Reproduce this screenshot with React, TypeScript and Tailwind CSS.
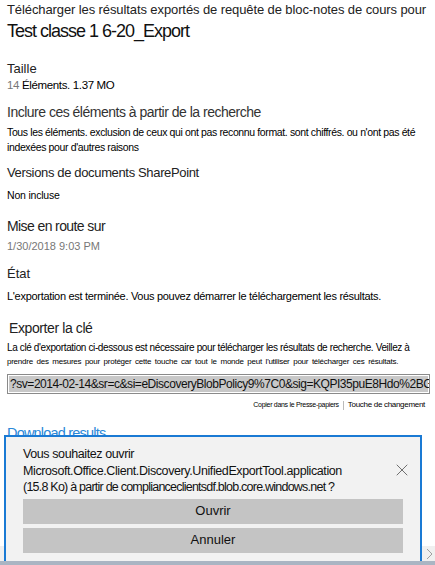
import { X } from "lucide-react";

const font = { fontFamily: '"Liberation Sans", Arial, sans-serif' };

function Label({ children, className = "" }: { children: React.ReactNode; className?: string }) {
  return <div className={`whitespace-nowrap text-[#222] ${className}`}>{children}</div>;
}

export default function App() {
  return (
    <div
      className="relative h-[565px] w-[435px] overflow-hidden bg-white text-black"
      style={font}
    >
      <div className="pl-[7px] pr-[5px]">
        <div className="whitespace-nowrap text-[13px] leading-[19px] tracking-[-0.1px] text-[#222]">
          Télécharger les résultats exportés de requête de bloc-notes de cours pour
        </div>
        <h1 className="whitespace-nowrap text-[18px] leading-[24px] tracking-[-1px] text-[#111]">
          Test classe 1 6-20_Export
        </h1>

        <Label className="mt-[17px] text-[13px] leading-[17px]">Taille</Label>
        <div className="whitespace-nowrap text-[11.5px] leading-[16px] tracking-[-0.35px]">
          <span className="text-[#777]">14</span> Éléments. 1.37 MO
        </div>

        <Label className="mt-[9px] text-[14px] leading-[20px] tracking-[-0.5px] text-[#333]">
          Inclure ces éléments à partir de la recherche
        </Label>
        <div className="mt-[3px] whitespace-nowrap text-[10.5px] leading-[15px] tracking-[-0.37px]">
          <div>Tous les éléments. exclusion de ceux qui ont pas reconnu format. sont chiffrés. ou n'ont pas été</div>
          <div>indexées pour d'autres raisons</div>
        </div>

        <Label className="mt-[9px] text-[13px] leading-[18px] tracking-[-0.35px]">
          Versions de documents SharePoint
        </Label>
        <div className="mt-[5px] text-[10.5px] leading-[16px] tracking-[-0.2px]">Non incluse</div>

        <Label className="mt-[13px] text-[14px] leading-[20px] tracking-[-0.6px]">Mise en route sur</Label>
        <div className="mt-[2px] text-[11px] leading-[16px] text-[#777]">1/30/2018 9:03 PM</div>

        <Label className="mt-[11px] text-[13px] leading-[18px]">État</Label>
        <div className="mt-[5px] whitespace-nowrap text-[11px] leading-[16px] tracking-[-0.3px]">
          L'exportation est terminée. Vous pouvez démarrer le téléchargement les résultats.
        </div>

        <Label className="ml-[2px] mt-[14px] text-[14px] leading-[20px] tracking-[-0.4px]">
          Exporter la clé
        </Label>
        <div className="mt-[3px] whitespace-nowrap text-[10px] leading-[14px] tracking-[-0.37px]">
          La clé d'exportation ci-dessous est nécessaire pour télécharger les résultats de recherche. Veillez à
        </div>
        <div className="whitespace-nowrap text-[8px] leading-[14px] tracking-[-0.25px] [word-spacing:1.7px]">
          prendre des mesures pour protéger cette touche car tout le monde peut l'utiliser pour télécharger ces résultats.
        </div>

        {/* key field, contents selected and scrolled past the right edge */}
        <div className="mt-[5px] h-[20px] w-[423px] overflow-hidden border border-[#8a8a8a] bg-white p-[1px]">
          <div className="h-full whitespace-nowrap bg-[#c8c8c8] pl-[1px] text-[12px] leading-[16px] tracking-[-0.45px] text-[#111]">
            ?sv=2014-02-14&amp;sr=c&amp;si=eDiscoveryBlobPolicy9%7C0&amp;sig=KQPI35puE8Hdo%2BG3c
          </div>
        </div>

        <div className="mt-[5px] flex items-center justify-end gap-[4px] pr-[5px] leading-[12px]">
          <span className="text-[7px] tracking-[-0.3px]">Copier dans le Presse-papiers</span>
          <span className="h-[9px] w-px bg-[#bbb]" />
          <span className="text-[8px] tracking-[-0.3px]">Touche de changement</span>
        </div>

        <div className="mt-[12px] whitespace-nowrap text-[14.5px] leading-[20px] tracking-[-0.8px] text-[#2b88d8]">
          Download results
        </div>
      </div>

      {/* horizontal scrollbar behind the download prompt */}
      <div className="absolute bottom-[4px] left-0 flex h-[15px] w-full items-center justify-end bg-[#f0f0f0] pr-[2px] text-[#a0a0a0]">
        <svg width="8" height="12" viewBox="0 0 8 12" fill="none" stroke="currentColor" strokeWidth="1">
          <path d="M2 1l5 5-5 5" />
        </svg>
      </div>
      <div className="absolute bottom-0 left-0 h-[4px] w-full bg-[#aab5c3]" />

      {/* download prompt */}
      <div className="absolute left-[4px] top-[435px] h-[126px] w-[418px] border-x-2 border-t-2 border-[#1a7ad4] bg-[#f2f2f2]">
        <div className="flex items-start pl-[17px] pr-[8px] pt-[9px]">
          <div className="flex-1 whitespace-nowrap text-[12.5px] leading-[16.5px] text-[#111]">
            <div className="tracking-[-0.4px]">Vous souhaitez ouvrir</div>
            <div className="tracking-[-0.4px]">Microsoft.Office.Client.Discovery.UnifiedExportTool.application</div>
            <div className="tracking-[-0.77px]">(15.8 Ko) à partir de complianceclientsdf.blob.core.windows.net ?</div>
          </div>
          <X className="mt-[14px] h-[20px] w-[20px] text-[#555]" strokeWidth={1} />
        </div>
        <div className="mt-[3px] flex flex-col gap-[4px] px-[17px]">
          <button className="h-[25px] w-full bg-[#c4c4c4] text-[13px] text-[#111]">Ouvrir</button>
          <button className="h-[25px] w-full bg-[#c4c4c4] text-[13px] text-[#111]">Annuler</button>
        </div>
      </div>
    </div>
  );
}
